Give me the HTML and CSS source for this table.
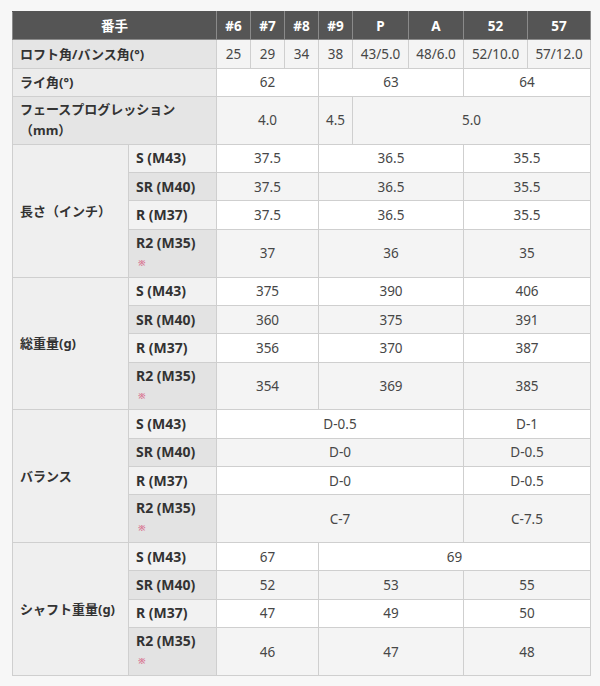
FILE: index.html
```html
<!DOCTYPE html>
<html lang="ja">
<head>
<meta charset="utf-8">
<title>スペック</title>
<link rel="stylesheet" href="styles.css">
</head>
<body>
<table class="spec">
  <colgroup>
    <col class="c-lab"><col class="c-sub">
    <col class="c-n"><col class="c-n"><col class="c-n"><col class="c-n">
    <col class="c-p"><col class="c-a"><col class="c-52"><col class="c-57">
  </colgroup>
  <thead>
    <tr class="r">
      <th colspan="2">番手</th>
      <th>#6</th><th>#7</th><th>#8</th><th>#9</th><th>P</th><th>A</th><th>52</th><th>57</th>
    </tr>
  </thead>
  <tbody>
    <tr class="r alt">
      <th class="lab dk" colspan="2">ロフト角/バンス角(°)</th>
      <td>25</td><td>29</td><td>34</td><td>38</td><td>43/5.0</td><td>48/6.0</td><td>52/10.0</td><td>57/12.0</td>
    </tr>
    <tr class="r">
      <th class="lab" colspan="2">ライ角(°)</th>
      <td colspan="3">62</td><td colspan="3">63</td><td colspan="2">64</td>
    </tr>
    <tr class="t alt">
      <th class="lab dk two" colspan="2">フェースプログレッション<br>（mm）</th>
      <td colspan="3">4.0</td><td>4.5</td><td colspan="4">5.0</td>
    </tr>

    <tr class="r">
      <th class="grp" rowspan="4">長さ（インチ）</th>
      <th class="sub">S (M43)</th>
      <td colspan="3">37.5</td><td colspan="3">36.5</td><td colspan="2">35.5</td>
    </tr>
    <tr class="r alt">
      <th class="sub dk">SR (M40)</th>
      <td colspan="3">37.5</td><td colspan="3">36.5</td><td colspan="2">35.5</td>
    </tr>
    <tr class="r">
      <th class="sub">R (M37)</th>
      <td colspan="3">37.5</td><td colspan="3">36.5</td><td colspan="2">35.5</td>
    </tr>
    <tr class="t alt">
      <th class="sub dk top">R2 (M35)<br><span class="mark">※</span></th>
      <td colspan="3">37</td><td colspan="3">36</td><td colspan="2">35</td>
    </tr>

    <tr class="r">
      <th class="grp" rowspan="4">総重量(g)</th>
      <th class="sub">S (M43)</th>
      <td colspan="3">375</td><td colspan="3">390</td><td colspan="2">406</td>
    </tr>
    <tr class="r alt">
      <th class="sub dk">SR (M40)</th>
      <td colspan="3">360</td><td colspan="3">375</td><td colspan="2">391</td>
    </tr>
    <tr class="r">
      <th class="sub">R (M37)</th>
      <td colspan="3">356</td><td colspan="3">370</td><td colspan="2">387</td>
    </tr>
    <tr class="t alt">
      <th class="sub dk top">R2 (M35)<br><span class="mark">※</span></th>
      <td colspan="3">354</td><td colspan="3">369</td><td colspan="2">385</td>
    </tr>

    <tr class="r">
      <th class="grp" rowspan="4">バランス</th>
      <th class="sub">S (M43)</th>
      <td colspan="6">D-0.5</td><td colspan="2">D-1</td>
    </tr>
    <tr class="r alt">
      <th class="sub dk">SR (M40)</th>
      <td colspan="6">D-0</td><td colspan="2">D-0.5</td>
    </tr>
    <tr class="r">
      <th class="sub">R (M37)</th>
      <td colspan="6">D-0</td><td colspan="2">D-0.5</td>
    </tr>
    <tr class="t alt">
      <th class="sub dk top">R2 (M35)<br><span class="mark">※</span></th>
      <td colspan="6">C-7</td><td colspan="2">C-7.5</td>
    </tr>

    <tr class="r">
      <th class="grp" rowspan="4">シャフト重量(g)</th>
      <th class="sub">S (M43)</th>
      <td colspan="3">67</td><td colspan="5">69</td>
    </tr>
    <tr class="r alt">
      <th class="sub dk">SR (M40)</th>
      <td colspan="3">52</td><td colspan="3">53</td><td colspan="2">55</td>
    </tr>
    <tr class="r">
      <th class="sub">R (M37)</th>
      <td colspan="3">47</td><td colspan="3">49</td><td colspan="2">50</td>
    </tr>
    <tr class="t alt">
      <th class="sub dk top">R2 (M35)<br><span class="mark">※</span></th>
      <td colspan="3">46</td><td colspan="3">47</td><td colspan="2">48</td>
    </tr>
  </tbody>
</table>
</body>
</html>
```

FILE: styles.css
```css
html, body {
  margin: 0;
  padding: 0;
  background: #f7f7f7;
}

body {
  padding: 11px 10px 0 12px;
  font-family: "Noto Sans", "Noto Sans CJK JP", sans-serif;
  font-size: 13px;
  color: #444;
}

.spec {
  width: 578px;
  border-collapse: collapse;
  table-layout: fixed;
  background: #fff;
}

.c-lab { width: 116px; }
.c-sub { width: 88px; }
.c-n { width: 34px; }
.c-p { width: 56px; }
.c-a { width: 55px; }
.c-52 { width: 64px; }
.c-57 { width: 63px; }

.spec th,
.spec td {
  border: 1px solid #cfcfcf;
  padding: 0;
  line-height: 18px;
  white-space: nowrap;
}

.spec td {
  text-align: center;
  vertical-align: middle;
  color: #474747;
  font-size: 13.5px;
  background: #fff;
}

.spec tr.alt td {
  background: #f4f4f4;
}

.spec tr.r { height: 28.33px; }
.spec tr.t { height: 47.8px; }

.spec thead th {
  background: #555555;
  color: #fff;
  font-weight: bold;
  font-size: 13.5px;
  text-align: center;
  border: 1px solid #8a8a8a;
  border-top-color: #555;
}

.spec tbody th {
  text-align: left;
  font-weight: bold;
  color: #333;
  padding-left: 7px;
  vertical-align: middle;
  background: #f0f0f0;
}

.spec tbody th.two { line-height: 21px; }

.spec tbody th.lab { background: #ececec; }
.spec tbody th.lab.dk { background: #e5e5e5; }
.spec tbody th.grp { background: #efefef; }
.spec tbody th.sub {
  background: #f2f2f2;
  font-size: 14px;
}
.spec tbody th.sub.dk { background: #e3e3e3; }

.spec tbody th.top {
  vertical-align: top;
  padding-top: 4px;
}

.mark {
  display: inline-block;
  margin-left: 2px;
  font-size: 9px;
  line-height: 16px;
  color: #d97a95;
  font-weight: bold;
}
```
